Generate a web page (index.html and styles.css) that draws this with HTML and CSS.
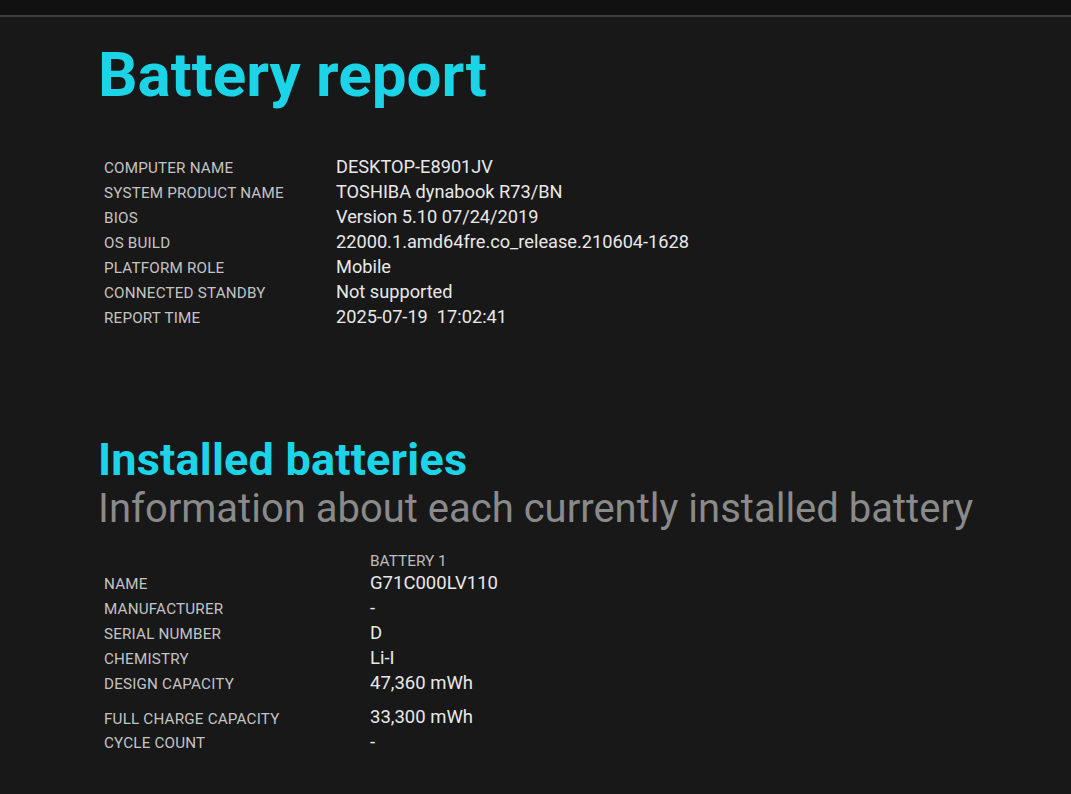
FILE: index.html
```html
<!DOCTYPE html>
<html>
<head>
<meta charset="utf-8">
<link rel="stylesheet" href="styles.css">
</head>
<body>
<div class="topbar"></div>
<main class="page">
  <h1 class="title">Battery report</h1>
  <table class="info">
    <tr><td class="label">COMPUTER NAME</td><td class="value">DESKTOP-E8901JV</td></tr>
    <tr><td class="label">SYSTEM PRODUCT NAME</td><td class="value">TOSHIBA dynabook R73/BN</td></tr>
    <tr><td class="label">BIOS</td><td class="value">Version 5.10 07/24/2019</td></tr>
    <tr><td class="label">OS BUILD</td><td class="value">22000.1.amd64fre.co_release.210604-1628</td></tr>
    <tr><td class="label">PLATFORM ROLE</td><td class="value">Mobile</td></tr>
    <tr><td class="label">CONNECTED STANDBY</td><td class="value">Not supported</td></tr>
    <tr><td class="label">REPORT TIME</td><td class="value">2025-07-19&nbsp; 17:02:41</td></tr>
  </table>

  <h2 class="section">Installed batteries</h2>
  <p class="subtitle">Information about each currently installed battery</p>

  <table class="batteries">
    <tr class="head"><td class="label"></td><td class="colhead">BATTERY 1</td></tr>
    <tr><td class="label">NAME</td><td class="value">G71C000LV110</td></tr>
    <tr><td class="label">MANUFACTURER</td><td class="value">-</td></tr>
    <tr><td class="label">SERIAL NUMBER</td><td class="value">D</td></tr>
    <tr><td class="label">CHEMISTRY</td><td class="value">Li-I</td></tr>
    <tr><td class="label">DESIGN CAPACITY</td><td class="value">47,360 mWh</td></tr>
    <tr class="spaced"><td class="label">FULL CHARGE CAPACITY</td><td class="value">33,300 mWh</td></tr>
    <tr><td class="label">CYCLE COUNT</td><td class="value">-</td></tr>
  </table>
</main>
</body>
</html>
```
FILE: styles.css
```css
html, body {
  margin: 0;
  padding: 0;
  background: #181818;
  font-family: Roboto, "Liberation Sans", sans-serif;
  color: #e6e6e6;
}
.topbar {
  height: 15px;
  background: #111111;
  border-bottom: 2px solid #3e3e3e;
}
.page {
  padding-left: 98px;
}
.title {
  margin: 0;
  padding-top: 20px;
  font-size: 62px;
  line-height: 75px;
  font-weight: 700;
  color: #1cd4e8;
}
.info, .batteries {
  border-collapse: collapse;
  margin-left: 6px;
}
.info {
  margin-top: 44px;
}
.info td, .batteries td {
  padding: 0;
  height: 25px;
  vertical-align: baseline;
}
.label {
  font-size: 15.2px;
  color: #c4c4c4;
  letter-spacing: 0.2px;
}
.info .label { width: 232px; }
.batteries .label { width: 266px; }
.value {
  font-size: 18.2px;
  color: #e8e8e8;
}
.batteries .value { font-size: 18.5px; }
.section {
  margin: 106px 0 0;
  font-size: 45px;
  line-height: 46px;
  font-weight: 700;
  letter-spacing: 0.2px;
  color: #1cd4e8;
}
.subtitle {
  margin: 3px 0 0;
  font-size: 40px;
  line-height: 46px;
  color: #8a8a8a;
}
.batteries {
  margin-top: 20px;
}
.colhead {
  font-size: 15.4px;
  color: #bdbdbd;
}
.batteries .head td { height: 20px; }
.batteries .spaced td { height: 31px; vertical-align: bottom; padding-bottom: 3px; }
```
